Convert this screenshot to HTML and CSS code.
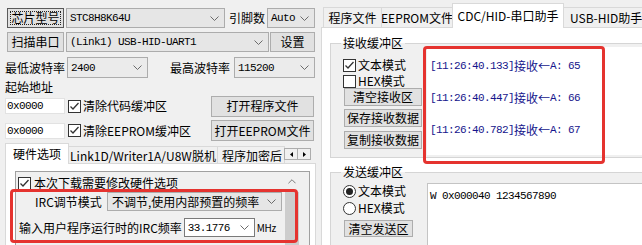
FILE: index.html
```html
<!DOCTYPE html>
<html lang="zh-CN">
<head>
<meta charset="utf-8">
<title>STC-ISP</title>
<link rel="stylesheet" href="styles.css">
</head>
<body>
<div class="app">
  <div class="left">
    <div class="row r1">
      <div class="btn btn-chip">芯片型号</div>
      <div class="combo combo-chip"><span class="mono">STC8H8K64U</span><svg class="chev" viewBox="0 0 9 5"><polyline points="0.5,0.5 4.5,4.5 8.5,0.5"/></svg></div>
      <span class="lbl lbl-pin">引脚数</span>
      <div class="combo combo-auto"><span class="mono">Auto</span><svg class="chev" viewBox="0 0 9 5"><polyline points="0.5,0.5 4.5,4.5 8.5,0.5"/></svg></div>
    </div>
    <div class="row r2">
      <div class="btn btn-scan">扫描串口</div>
      <div class="combo combo-port"><span class="mono">(Link1) USB-HID-UART1</span><svg class="chev" viewBox="0 0 9 5"><polyline points="0.5,0.5 4.5,4.5 8.5,0.5"/></svg></div>
      <div class="btn btn-set">设置</div>
    </div>
    <div class="row r3">
      <span class="lbl lbl-baud-lo">最低波特率</span>
      <div class="combo combo-baud-lo"><span class="mono">2400</span><svg class="chev" viewBox="0 0 9 5"><polyline points="0.5,0.5 4.5,4.5 8.5,0.5"/></svg></div>
      <span class="lbl lbl-baud-hi">最高波特率</span>
      <div class="combo combo-baud-hi"><span class="mono">115200</span><svg class="chev" viewBox="0 0 9 5"><polyline points="0.5,0.5 4.5,4.5 8.5,0.5"/></svg></div>
    </div>
    <div class="row r4"><span class="lbl lbl-addr">起始地址</span></div>
    <div class="row r5">
      <div class="input mono">0x0000</div>
      <svg class="cb" viewBox="0 0 13 13"><rect x="0.5" y="0.5" width="12" height="12"/><polyline points="2.5,6.5 5,9 10.5,3"/></svg>
      <span class="chk-text">清除代码缓冲区</span>
      <div class="btn btn-open">打开程序文件</div>
    </div>
    <div class="row r6">
      <div class="input mono">0x0000</div>
      <svg class="cb" viewBox="0 0 13 13"><rect x="0.5" y="0.5" width="12" height="12"/><polyline points="2.5,6.5 5,9 10.5,3"/></svg>
      <span class="chk-text">清除EEPROM缓冲区</span>
      <div class="btn btn-open">打开EEPROM文件</div>
    </div>
    <div class="ltabs">
      <div class="tab sel ltab-hw">硬件选项</div>
      <div class="tab ltab-link">Link1D/Writer1A/U8W脱机</div>
      <div class="tab ltab-enc">程序加密后</div>
      <div class="tab-arrows">
        <div class="tab-arrow"><svg class="tri" viewBox="0 0 3 5"><polygon points="3,0 3,5 0,2.5"/></svg></div>
        <div class="tab-arrow"><svg class="tri" viewBox="0 0 3 5"><polygon points="0,0 0,5 3,2.5"/></svg></div>
      </div>
    </div>
    <div class="lpanel">
      <div class="hwbox">
        <div class="hw-content">
          <div class="hw-row-a">
            <svg class="cb" viewBox="0 0 13 13"><rect x="0.5" y="0.5" width="12" height="12"/><polyline points="2.5,6.5 5,9 10.5,3"/></svg>
            <span class="hw-chk-text">本次下载需要修改硬件选项</span>
          </div>
          <div class="hw-row-b">
            <span class="lbl lbl-irc">IRC调节模式</span>
            <div class="combo combo-irc"><span>不调节,使用内部预置的频率</span><svg class="chev" viewBox="0 0 9 5"><polyline points="0.5,0.5 4.5,4.5 8.5,0.5"/></svg></div>
          </div>
          <div class="hw-row-c">
            <span class="lbl">输入用户程序运行时的IRC频率</span>
            <div class="combo combo-freq"><span class="mono">33.1776</span><svg class="chev" viewBox="0 0 9 5"><polyline points="0.5,0.5 4.5,4.5 8.5,0.5"/></svg></div>
            <span class="mhz">MHz</span>
          </div>
        </div>
        <div class="vscroll">
          <div class="vs-up"><svg class="chev-up" viewBox="0 0 9 5"><polyline points="0.5,4.5 4.5,0.5 8.5,4.5"/></svg></div>
          <div class="vs-thumb"></div>
        </div>
      </div>
    </div>
  </div>

  <div class="right">
    <div class="rtabs">
      <div class="tab rtab-prog">程序文件</div>
      <div class="tab rtab-eep">EEPROM文件</div>
      <div class="tab sel rtab-cdc">CDC/HID-串口助手</div>
      <div class="tab rtab-usb">USB-HID助手</div>
    </div>
    <div class="rpanel">
      <fieldset class="group group-rx">
        <legend>接收缓冲区</legend>
        <div class="group-body">
          <div class="ctrl-col">
            <div class="opt opt-first">
              <svg class="cb" viewBox="0 0 13 13"><rect x="0.5" y="0.5" width="12" height="12"/><polyline points="2.5,6.5 5,9 10.5,3"/></svg>
              <span class="opt-text">文本模式</span>
            </div>
            <div class="opt opt-second">
              <svg class="cb" viewBox="0 0 13 13"><rect x="0.5" y="0.5" width="12" height="12"/></svg>
              <span class="opt-text">HEX模式</span>
            </div>
            <div class="btn btn-side btn-clear-rx">清空接收区</div>
            <div class="btn btn-side btn-save">保存接收数据</div>
            <div class="btn btn-side btn-copy">复制接收数据</div>
          </div>
          <div class="rx-text">
            <div class="rx-line"><span class="mono-blue">[11:26:40.133]</span><span class="cjk">接收←</span><span class="mono-blue">A: 65</span></div>
            <div class="rx-line"><span class="mono-blue">[11:26:40.447]</span><span class="cjk">接收←</span><span class="mono-blue">A: 66</span></div>
            <div class="rx-line"><span class="mono-blue">[11:26:40.782]</span><span class="cjk">接收←</span><span class="mono-blue">A: 67</span></div>
          </div>
        </div>
      </fieldset>
      <fieldset class="group group-tx">
        <legend>发送缓冲区</legend>
        <div class="group-body">
          <div class="ctrl-col">
            <div class="opt opt-radio1">
              <svg class="rb" viewBox="0 0 13 13"><circle cx="6.5" cy="6.5" r="6"/><circle class="dot" cx="6.5" cy="6.5" r="3.5"/></svg>
              <span class="opt-text">文本模式</span>
            </div>
            <div class="opt opt-radio2">
              <svg class="rb" viewBox="0 0 13 13"><circle cx="6.5" cy="6.5" r="6"/></svg>
              <span class="opt-text">HEX模式</span>
            </div>
            <div class="btn btn-side btn-clear-tx">清空发送区</div>
          </div>
          <div class="tx-text"><span class="mono">W 0x000040 1234567890</span></div>
        </div>
      </fieldset>
    </div>
  </div>

  <div class="mark mark-left"></div>
  <div class="mark mark-right"></div>
</div>
</body>
</html>
```
FILE: styles.css
```css
* { box-sizing: border-box; }
html, body { margin: 0; padding: 0; }
body {
  width: 642px; height: 245px; overflow: hidden;
  background: #f0f0f0; color: #000;
  font-family: "Noto Sans CJK SC", "Noto Sans", sans-serif;
  font-size: 12px; line-height: 14px;
}
.app { position: relative; display: flex; width: 642px; height: 245px; overflow: hidden; }

.mono { font-family: "Liberation Mono", "Noto Sans CJK SC", monospace; font-size: 11px; letter-spacing: -0.6px; }

/* ---------- left column ---------- */
.left { flex: none; width: 320px; padding: 8px 0 0 4px; display: flex; flex-direction: column; }
.row { display: flex; align-items: center; flex: none; }
.r1 { height: 20px; }
.r2 { height: 20px; margin-top: 4px; }
.r3 { height: 21px; margin-top: 5px; }
.r4 { height: 14px; margin-top: 2px; }
.r5 { height: 20px; margin-top: 2px; }
.r6 { height: 21px; margin-top: 4px; }

.lbl { flex: none; white-space: nowrap; }
.btn {
  flex: none; display: flex; align-items: center; justify-content: center;
  background: #e1e1e1; border: 1px solid #adadad; white-space: nowrap;
}
.combo {
  flex: none; display: flex; align-items: center; justify-content: space-between;
  height: 20px; padding: 0 5px 0 3px; background: #e6e6e6; border: 1px solid #acacac;
  white-space: nowrap; overflow: hidden;
}
.chev { width: 9px; height: 5px; flex: none; }
.chev polyline, .chev-up polyline { fill: none; stroke: #6b6b6b; stroke-width: 1; }

.btn-chip { margin-left: 3px; width: 57px; height: 20px; border-color: #5a5a5a; outline: 1px dotted #222; outline-offset: -4px; }
.combo-chip { margin-left: 2px; width: 159px; }
.lbl-pin { margin-left: 4px; width: 36px; }
.combo-auto { margin-left: 2px; width: 48px; }

.btn-scan { margin-left: 3px; width: 57px; height: 20px; }
.combo-port { margin-left: 2px; width: 203px; }
.btn-set { margin-left: 1px; width: 45px; height: 20px; }

.lbl-baud-lo { margin-left: 1px; width: 60px; }
.combo-baud-lo { margin-left: 2px; width: 81px; height: 21px; background: #ebebeb; }
.lbl-baud-hi { margin-left: 22px; width: 60px; }
.combo-baud-hi { margin-left: 4px; width: 81px; height: 21px; background: #ebebeb; }

.lbl-addr { margin-left: 1px; }

.input { flex: none; margin-left: 1px; width: 60px; height: 16px; background: #fff; border: 1px solid #e2e2e2; padding-left: 1px; display: flex; align-items: center; }
.cb { width: 13px; height: 13px; flex: none; }
.cb rect { fill: #fff; stroke: #333; stroke-width: 1; }
.cb polyline { fill: none; stroke: #333; stroke-width: 1.3; }
.r5 .cb, .r6 .cb { margin-left: 3px; }
.chk-text { margin-left: 2px; white-space: nowrap; }
.btn-open { margin-left: auto; margin-right: 6px; width: 103px; height: 21px; }

/* tabs */
.ltabs { display: flex; align-items: flex-end; height: 22px; margin-top: 1px; flex: none; }
.tab {
  flex: none; display: flex; align-items: center; justify-content: center;
  height: 18px; margin-left: -1px; border: 1px solid #d9d9d9; border-bottom: none;
  background: #f0f0f0; white-space: nowrap; overflow: hidden;
}
.tab.sel { background: #fff; position: relative; z-index: 1; }
.ltabs .tab.sel { height: 21px; }
.ltab-hw { margin-left: 1px; width: 64px; }
.ltab-link { width: 150px; }
.ltab-enc { width: 68px; justify-content: flex-start; padding-left: 4px; }
.tab-arrows { flex: none; align-self: flex-start; display: flex; margin-top: 6px; margin-left: -1px; position: relative; z-index: 2; }
.tab-arrow { width: 14px; height: 12px; margin-right: -1px; border: 1px solid #adadad; background: #f0f0f0; display: flex; align-items: center; justify-content: center; }
.tri { width: 3px; height: 5px; }
.tri polygon { fill: #000; }

.lpanel { flex: 1; width: 311px; margin: -1px 0 0 1px; border: 1px solid #d9d9d9; background: #fff; padding: 7px 0 0 9px; }
.hwbox { display: flex; width: 295px; height: 100px; border: 1px solid #a0a0a0; background: #f0f0f0; }
.hw-content { flex: none; width: 269px; padding: 4px 0 0 2px; }
.hw-row-a { display: flex; align-items: center; height: 14px; }
.hw-chk-text { margin-left: 3px; white-space: nowrap; }
.hw-row-b { display: flex; align-items: center; height: 19px; margin-top: 2px; padding-left: 17px; }
.lbl-irc { width: 72px; }
.combo-irc { width: 175px; height: 19px; padding-left: 4px; }
.hw-row-c { display: flex; align-items: center; height: 19px; margin-top: 7px; padding-left: 1px; }
.combo-freq { margin-left: 2px; width: 71px; height: 19px; background: #fff; border-color: #7a7a7a; }
.mhz { margin-left: 2px; font-size: 10px; letter-spacing: -0.3px; }

.vscroll { flex: none; width: 14px; display: flex; flex-direction: column; }
.vs-up { height: 19px; display: flex; align-items: center; justify-content: center; }
.chev-up { width: 8px; height: 5px; }
.vs-thumb { flex: 1; margin-top: 1px; background: #cdcdcd; }

/* ---------- right column ---------- */
.right { flex: 1; min-width: 0; display: flex; flex-direction: column; padding-top: 3px; }
.rtabs { display: flex; align-items: flex-end; height: 25px; padding-left: 3px; flex: none; }
.rtabs .tab { height: 21px; }
.rtabs .tab.sel { height: 25px; }
.rtab-prog { margin-left: 0; width: 59px; }
.rtab-eep { width: 72px; }
.rtab-cdc { width: 112px; }
.rtab-usb { width: 90px; justify-content: flex-start; padding-left: 6px; }

.rpanel { flex: 1; margin: -1px -12px 0 1px; border: 1px solid #d9d9d9; background: #fff; padding: 8px 0 0 8px; }
.group { margin: 0; padding: 0; min-width: 0; border: 1px solid #d5d5d5; background: #f0f0f0; }
.group legend { margin-left: 10px; padding: 0 2px; line-height: 14px; }
.group-tx { margin-top: 7px; }
.group-body { display: flex; padding: 0 0 2px 12px; }
.ctrl-col { flex: none; width: 81px; display: flex; flex-direction: column; }
.opt { display: flex; align-items: center; height: 14px; }
.opt-text { margin-left: 2px; white-space: nowrap; }
.opt-first { margin-top: 8px; }
.opt-second { margin-top: 2px; }
.btn-side { margin-left: 1px; }
.btn-clear-rx { width: 78px; height: 18px; }
.btn-save { width: 78px; height: 18px; margin-top: 3px; }
.btn-copy { width: 78px; height: 18px; margin-top: 4px; }
.rx-text { flex: 1; margin: -3px 0 0 3px; height: 108px; background: #fff; padding: 12px 0 0 3px; }
.rx-line { height: 14px; margin-bottom: 18px; white-space: nowrap; color: #15158c; display: flex; align-items: center; }
.mono-blue { font-family: "Liberation Mono", monospace; font-size: 11px; letter-spacing: -0.6px; }
.cjk { font-size: 12px; }

.rb { width: 13px; height: 13px; flex: none; }
.rb circle { fill: #fff; stroke: #333; stroke-width: 1; }
.rb circle.dot { fill: #222; stroke: none; }
.opt-radio1 { margin-top: 5px; }
.opt-radio2 { margin-top: 3px; }
.btn-clear-tx { width: 69px; height: 17px; margin-top: 5px; }
.tx-text { flex: 1; margin: 4px 0 0 3px; height: 70px; background: #fff; border: 1px solid #c4c4c4; padding: 3px 0 0 2px; white-space: nowrap; }

/* red annotation boxes drawn over the UI */
.mark { position: absolute; border: 3px solid #e5332f; border-radius: 4px; pointer-events: none; }
.mark-left { left: 10px; top: 189px; width: 288px; height: 54px; }
.mark-right { left: 423px; top: 46px; width: 182px; height: 118px; }
```
